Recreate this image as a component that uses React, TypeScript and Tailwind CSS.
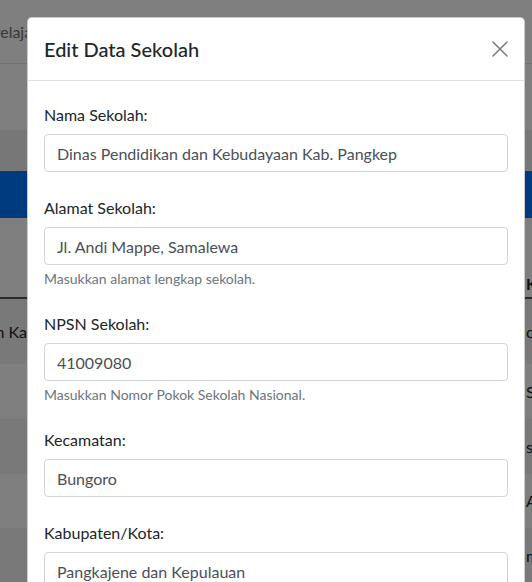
import React from "react";

const font = { fontFamily: 'Lato, "Noto Sans", sans-serif' };

interface FieldProps {
  label: string;
  value: string;
  help?: string;
}

function Field({ label, value, help }: FieldProps) {
  return (
    <div className="mb-6">
      <label className="block text-[16px] leading-6 text-[#212529] mb-[7px]">{label}</label>
      <input
        readOnly
        value={value}
        className="block w-full h-[38px] px-3 text-[16px] text-[#495057] bg-white border border-[#ced4da] rounded outline-none"
        style={font}
      />
      {help && <small className="block mt-1 text-[14px] leading-[19px] text-[#6c757d]">{help}</small>}
    </div>
  );
}

function BackgroundPage() {
  const rows = [
    { left: "Dinas Pendidikan Ka", right: "or", h: "h-[65px]", stripe: "bg-[#f2f2f2]" },
    { left: "", right: "S", h: "h-[55px]", stripe: "bg-white" },
    { left: "", right: "sy", h: "h-[55px]", stripe: "bg-[#f2f2f2]" },
    { left: "", right: "AI", h: "h-[54px]", stripe: "bg-white" },
    { left: "", right: "m", h: "h-[55px]", stripe: "bg-[#f2f2f2]" },
  ];
  return (
    <div className="w-full bg-white text-[#212529]">
      {/* navbar */}
      <div className="h-16 flex items-center border-b border-[#dee2e6] overflow-hidden whitespace-nowrap">
        <span className="-ml-[9px] text-[16px] text-[#6f6f6f]">Pelajaran</span>
      </div>
      <div className="h-[66px]" />
      <div className="h-[41px] bg-[#eeeeee]" />
      <div className="h-[47px] bg-[#0074ff]" />
      {/* table header */}
      <div className="h-[81px] flex items-end justify-end pb-[1px] border-b-2 border-[#555555] overflow-hidden whitespace-nowrap">
        <span className="w-[6px] overflow-hidden font-bold text-[16px]">K</span>
      </div>
      {rows.map((r, i) => (
        <div key={i} className={`${r.h} ${r.stripe} flex items-center justify-between overflow-hidden whitespace-nowrap`}>
          <span className="w-[27px] flex justify-end overflow-hidden text-[16px]">
            <span className="shrink-0">{r.left}</span>
          </span>
          <span className="w-[6px] overflow-hidden text-[16px]">{r.right}</span>
        </div>
      ))}
    </div>
  );
}

export default function App() {
  return (
    <div className="relative w-[532px] h-[582px] overflow-hidden" style={font}>
      <BackgroundPage />
      {/* backdrop */}
      <div className="absolute inset-0 bg-black/50" />
      {/* modal */}
      <div className="absolute top-[17px] left-[27px] w-[498px] bg-white border border-black/20 rounded-[5px]">
        <div className="flex items-center justify-between px-4 py-4 border-b border-[#dee2e6]">
          <h5 className="text-[20px] leading-[30px] font-medium text-[#212529]">Edit Data Sekolah</h5>
          <button className="w-4 h-4 opacity-50" aria-label="Close">
            <svg viewBox="0 0 16 16" className="w-4 h-4" fill="none" stroke="#000" strokeWidth="1.6" strokeLinecap="round">
              <path d="M1 1L15 15M15 1L1 15" />
            </svg>
          </button>
        </div>
        <div className="px-4 pt-[22px] pb-4">
          <Field label="Nama Sekolah:" value="Dinas Pendidikan dan Kebudayaan Kab. Pangkep" />
          <Field label="Alamat Sekolah:" value="Jl. Andi Mappe, Samalewa" help="Masukkan alamat lengkap sekolah." />
          <Field label="NPSN Sekolah:" value="41009080" help="Masukkan Nomor Pokok Sekolah Nasional." />
          <Field label="Kecamatan:" value="Bungoro" />
          <Field label="Kabupaten/Kota:" value="Pangkajene dan Kepulauan" />
          <Field label="Provinsi:" value="Sulawesi Selatan" />
        </div>
      </div>
    </div>
  );
}
